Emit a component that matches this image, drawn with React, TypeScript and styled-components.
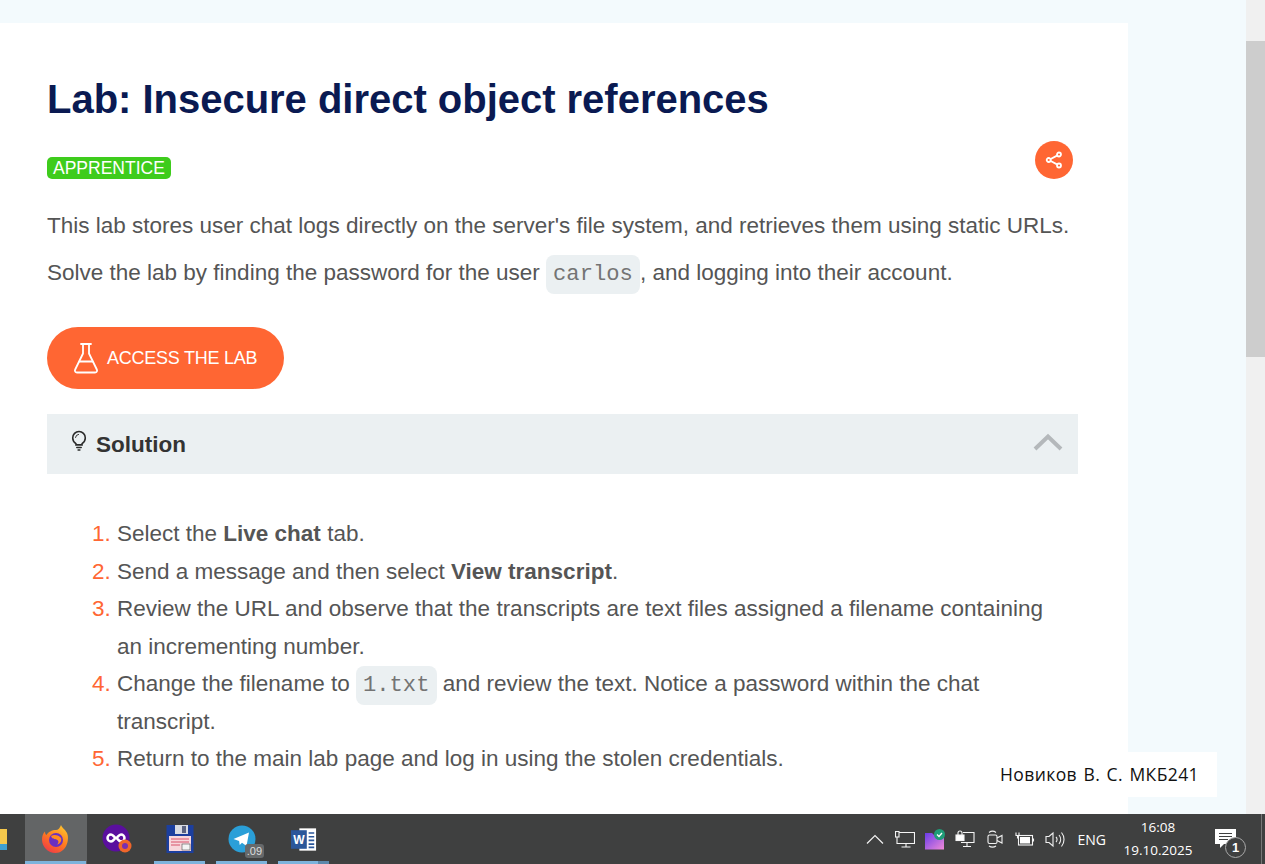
import React from 'react'
import styled, { createGlobalStyle } from 'styled-components'

const GlobalStyle = createGlobalStyle`
  html, body {
    margin: 0;
    padding: 0;
    height: 100%;
    overflow: hidden;
    font-family: "Liberation Sans", Arial, sans-serif;
  }
`

const App = () => {
  const steps = [
    <>Select the <b>Live chat</b> tab.</>,
    <>Send a message and then select <b>View transcript</b>.</>,
    <>Review the URL and observe that the transcripts are text files assigned a filename containing an incrementing number.</>,
    <>Change the filename to <Code>1.txt</Code> and review the text. Notice a password within the chat transcript.</>,
    <>Return to the main lab page and log in using the stolen credentials.</>,
  ]
  return (
    <Screen>
      <GlobalStyle />
      <Browser>
        <Page>
          <Card>
            <Title>Lab: Insecure direct object references</Title>
            <LevelRow>
              <Badge>APPRENTICE</Badge>
              <ShareButton>
                <svg width="18" height="18" viewBox="0 0 18 18" fill="none" stroke="#fff" strokeWidth="1.8">
                  <circle cx="14" cy="3.5" r="2" />
                  <circle cx="3.7" cy="9" r="2" />
                  <circle cx="14" cy="14.5" r="2" />
                  <path d="M5.7 8 12 4.6M5.7 10 12 13.4" />
                </svg>
              </ShareButton>
            </LevelRow>
            <Para>This lab stores user chat logs directly on the server's file system, and retrieves them using static URLs.</Para>
            <Para>Solve the lab by finding the password for the user <Code>carlos</Code>, and logging into their account.</Para>
            <AccessButton>
              <svg width="26" height="32" viewBox="0 0 26 32" fill="none" stroke="#fff" strokeWidth="1.8" strokeLinejoin="round" strokeLinecap="round">
                <path d="M8 2h10M10 2v9.500L2.200 27.500C1.400 29.200 2.300 30.500 4 30.500h18c1.700 0 2.600-1.300 1.800-3L16 11.500V2" />
                <path d="M6.500 19.500h13" />
              </svg>
              ACCESS THE LAB
            </AccessButton>
            <SolutionHeader>
              <BulbIcon width="16" height="21" viewBox="0 0 18 24" fill="none" stroke="#2b2b2b" strokeWidth="1.8" strokeLinecap="round">
                <path d="M5.500 15.500C3.500 14 1.800 12 1.800 9a7.200 7.200 0 0 1 14.400 0c0 3-1.700 5-3.700 6.500v1.500h-7z" />
                <path d="M6.500 20h5M8 22.800h2" />
                <path d="M5 8.500a4 4 0 0 1 3.500-3.500" strokeWidth="1.100" />
              </BulbIcon>
              <SolutionTitle>Solution</SolutionTitle>
              <Chevron width="30" height="18" viewBox="0 0 30 18" fill="none" stroke="#b4b8bb" strokeWidth="4">
                <path d="M2 16 15 3.500 28 16" />
              </Chevron>
            </SolutionHeader>
            <Steps>
              {steps.map((step, i) => (
                <Step key={i}>{step}</Step>
              ))}
            </Steps>
          </Card>
        </Page>
        <Scrollbar>
          <Thumb />
        </Scrollbar>
        <Caption>Новиков В. С. МКБ241</Caption>
      </Browser>
      <Taskbar>
        <Apps>
          <FolderStub />
          <AppSlot $active $running>
            <svg width="30" height="30" viewBox="0 0 30 30">
              <defs>
                <linearGradient id="fx" x1="0.8" y1="0" x2="0.2" y2="1">
                  <stop offset="0" stopColor="#ffc52e" />
                  <stop offset="0.5" stopColor="#ff7a1f" />
                  <stop offset="1" stopColor="#f0364a" />
                </linearGradient>
              </defs>
              <path d="M20 1c1 3 4 4 6 8 3 7-1 20-11.500 20C7 29 1 23 1 15.500 1 12 2 9.500 4 7.500c0 2 .5 3 1.500 3.500C7 8 11 6 15 6c2 0 4-2 5-5z" fill="url(#fx)" />
              <circle cx="15" cy="16" r="7" fill="#6a2fc0" />
              <path d="M10 12c3-2 8-1 10 2 1 3-1 6-4 6.500 2-1.500 2-4-.5-5-2-.5-4 0-5.500-3.500z" fill="#ff8a1f" />
            </svg>
          </AppSlot>
          <AppSlot>
            <svg width="32" height="30" viewBox="0 0 32 30">
              <circle cx="14" cy="14" r="13.500" fill="#5a0f9e" />
              <path d="M9 10.500c2.500 0 3.500 3.500 5 3.500s2.500-3.500 5-3.500a3.500 3.500 0 0 1 0 7c-2.500 0-3.500-3.500-5-3.500s-2.500 3.500-5 3.500a3.500 3.500 0 0 1 0-7z" fill="none" stroke="#fff" strokeWidth="2.500" />
              <circle cx="23" cy="22" r="6.500" fill="#f0662a" />
              <circle cx="23" cy="22" r="3" fill="#7b2fb0" />
            </svg>
          </AppSlot>
          <AppSlot $running>
            <svg width="28" height="30" viewBox="0 0 28 30">
              <rect x="0.500" y="1" width="27" height="28" fill="#1c3f9e" />
              <rect x="9" y="1" width="13" height="9" fill="#d8dbe2" />
              <rect x="16" y="2" width="4" height="7" fill="#5c6480" />
              <rect x="3" y="12" width="22" height="15" fill="#f7d7dc" />
              <path d="M5 15h18M5 18h18M5 21h9" stroke="#d8536b" strokeWidth="1" />
              <rect x="16" y="20" width="8" height="6" fill="#f4f4f4" stroke="#333" strokeWidth="0.500" />
            </svg>
          </AppSlot>
          <AppSlot $running>
            <TelegramWrap>
              <svg width="28" height="28" viewBox="0 0 28 28">
                <circle cx="14" cy="14" r="13.500" fill="#2a9fd8" />
                <path d="M5.500 14 21 7.500 18.500 21l-4.500-3.300-2.300 2.200-.6-4z" fill="#fff" />
              </svg>
              <CountTag>.09</CountTag>
            </TelegramWrap>
          </AppSlot>
          <AppSlot $running $split>
            <svg width="26" height="25" viewBox="0 0 28 26">
              <rect x="9" y="1" width="18" height="24" fill="#fff" />
              <path d="M19 6h6M19 10h6M19 14h6M19 18h6M19 21.500h6" stroke="#2b579a" strokeWidth="1.800" />
              <rect x="0" y="3" width="17" height="20" fill="#2b579a" />
              <text x="8.500" y="18" fontSize="13" fontWeight="700" fill="#fff" textAnchor="middle" fontFamily="Liberation Sans">W</text>
            </svg>
          </AppSlot>
        </Apps>
        <Tray>
          <TrayIcons>
            <TraySlot>
              <svg width="18" height="10" viewBox="0 0 18 10" fill="none" stroke="#f2f2f2" strokeWidth="1.200">
                <path d="M1 9.500 9 1.500 17 9.500" />
              </svg>
            </TraySlot>
            <TraySlot>
              <svg width="20" height="17" viewBox="0 0 20 17" fill="none" stroke="#f5f5f5" strokeWidth="1.100">
                <path d="M4 1.500h15.500v11H2V6M11 12.500v3M6.500 16h9" />
                <rect x="0.500" y="0.500" width="3.500" height="5.500" fill="#3f4040" />
              </svg>
            </TraySlot>
            <TraySlot>
              <svg width="22" height="21" viewBox="0 0 22 21">
                <defs>
                  <linearGradient id="vault" x1="0" y1="0" x2="1" y2="1">
                    <stop offset="0" stopColor="#6a3ce8" />
                    <stop offset="1" stopColor="#f08ad8" />
                  </linearGradient>
                </defs>
                <path d="M1 4h7l2 2h10v14.500H1z" fill="url(#vault)" />
                <circle cx="15.500" cy="5.500" r="5.500" fill="#1f9d78" />
                <path d="M13 5.500l2 2 3-3.500" stroke="#fff" strokeWidth="1.300" fill="none" />
              </svg>
            </TraySlot>
            <TraySlot>
              <svg width="20" height="18" viewBox="0 0 20 18" fill="none" stroke="#f5f5f5" strokeWidth="1.100">
                <path d="M8 2.500h11v10H6M12 12.500v3.500M8 16.500h8" />
                <rect x="1" y="5" width="8" height="5.500" fill="#fff" />
                <path d="M3 5V3a2 2 0 0 1 4 0v2" />
              </svg>
            </TraySlot>
            <TraySlot>
              <svg width="16" height="18" viewBox="0 0 16 18" fill="none" stroke="#f0f0f0" strokeWidth="1.100">
                <rect x="1" y="5" width="9" height="8.500" rx="1.500" />
                <path d="M10 8 15 5.500v7.500L10 10.500M2 2.500c2-1.500 5-1.500 7 0M2 16c2 1.300 5 1.300 7 0" />
              </svg>
            </TraySlot>
            <TraySlot>
              <svg width="20" height="14" viewBox="0 0 20 14" fill="none" stroke="#f5f5f5" strokeWidth="1.100">
                <rect x="3.500" y="3.500" width="14" height="9.500" />
                <rect x="5" y="5" width="10" height="6.500" fill="#fff" stroke="none" />
                <path d="M1 0.500v3h3v-3M2.500 3.500v3M18.500 6.500v3" />
              </svg>
            </TraySlot>
            <TraySlot>
              <svg width="20" height="17" viewBox="0 0 20 17" fill="none" stroke="#f0f0f0" strokeWidth="1.100">
                <path d="M1 5.500h3L8 2v13l-4-3.500H1z" />
                <path d="M11 6a3.500 3.500 0 0 1 0 5M14 4a7 7 0 0 1 0 9M16.500 1.500a11 11 0 0 1 0 14" />
              </svg>
            </TraySlot>
          </TrayIcons>
          <Lang>ENG</Lang>
          <Clock>
            <span>16:08</span>
            <span>19.10.2025</span>
          </Clock>
          <Notify>
            <svg width="21" height="19" viewBox="0 0 21 19">
              <path d="M0 0h21v15H9l-4 4v-4H0z" fill="#fff" />
              <path d="M4 4.500h13M4 7.500h13M4 10.500h9" stroke="#3f4040" strokeWidth="1.100" />
            </svg>
            <NotifyCount>1</NotifyCount>
          </Notify>
          <ShowDesktop />
        </Tray>
      </Taskbar>
    </Screen>
  )
}

const Code = styled.code`
  font-family: "Liberation Mono", "Courier New", monospace;
  font-size: 22.2px;
  line-height: 1;
  color: #747474;
  background: #ebf0f2;
  border-radius: 8px;
  padding: 7px 7px;
`

const Screen = styled.div`
  width: 1265px;
  height: 864px;
  display: flex;
  flex-direction: column;
  overflow: hidden;
`

const Browser = styled.div`
  position: relative;
  flex: 1;
  min-height: 0;
  display: flex;
`

const Page = styled.main`
  flex: 1;
  min-width: 0;
  background: #f3fafd;
  padding-top: 23px;
  overflow: hidden;
`

const Card = styled.article`
  width: 1128px;
  height: 100%;
  box-sizing: border-box;
  background: #fff;
  padding: 52px 50px 0 47px;
`

const Title = styled.h1`
  margin: 0;
  font-size: 40px;
  letter-spacing: -0.02px;
  line-height: 48px;
  font-weight: 700;
  color: #0a1a52;
`

const LevelRow = styled.div`
  display: flex;
  align-items: flex-start;
  justify-content: space-between;
  margin-top: 18px;
  padding-right: 5px;
  height: 61px;
`

const Badge = styled.span`
  margin-top: 16px;
  background: #3ecc1c;
  color: #fff;
  font-size: 17.5px;
  line-height: 22px;
  padding: 0 6px;
  border-radius: 5px;
`

const ShareButton = styled.button`
  width: 38px;
  height: 38px;
  border: none;
  padding: 0;
  border-radius: 50%;
  background: #ff6633;
  display: flex;
  align-items: center;
  justify-content: center;
`

const Para = styled.p`
  margin: 0;
  font-size: 22.5px;
  line-height: 47px;
  color: #555;
  white-space: nowrap;
`

const AccessButton = styled.button`
  display: flex;
  align-items: center;
  gap: 8px;
  margin-top: 31px;
  width: 237px;
  height: 62px;
  padding: 0 0 0 26px;
  border: none;
  border-radius: 31px;
  background: #ff6633;
  color: #fff;
  font-family: "Liberation Sans", Arial, sans-serif;
  font-size: 18px;
  letter-spacing: -0.25px;
`

const SolutionHeader = styled.div`
  display: flex;
  align-items: center;
  margin-top: 25px;
  height: 60px;
  width: 1031px;
  background: #ebf0f2;
  padding: 0 15px 0 24px;
  box-sizing: border-box;
`

const BulbIcon = styled.svg`
  margin-top: -7px;
`

const SolutionTitle = styled.span`
  margin-left: 9px;
  padding-top: 1px;
  flex: 1;
  font-size: 22.5px;
  font-weight: 700;
  color: #333;
`

const Chevron = styled.svg`
  margin-top: -5px;
`

const Steps = styled.ol`
  margin: 41px 0 0;
  padding: 0 0 0 70px;
  width: 940px;
  font-size: 22.5px;
  line-height: 37.5px;
  color: #555;

  b {
    font-weight: 700;
  }
`

const Step = styled.li`
  &::marker {
    color: #ff6633;
  }
`

const Scrollbar = styled.div`
  width: 19px;
  flex-shrink: 0;
  background: #f0f0f0;
  padding-top: 41px;
`

const Thumb = styled.div`
  height: 316px;
  background: #cdcdcd;
`

const Caption = styled.div`
  position: absolute;
  left: 990px;
  top: 752px;
  width: 227px;
  height: 45px;
  box-sizing: border-box;
  padding-left: 10px;
  background: #fff;
  color: #111;
  font-family: "Open Sans", sans-serif;
  font-size: 17.5px;
  letter-spacing: 0.4px;
  word-spacing: 1.5px;
  line-height: 45px;
  white-space: nowrap;
`

const Taskbar = styled.footer`
  height: 50px;
  flex-shrink: 0;
  background: #3f4040;
  display: flex;
  justify-content: space-between;
`

const Apps = styled.div`
  display: flex;
`

const FolderStub = styled.div`
  width: 7px;
  height: 21px;
  margin: 15px 18px 0 0;
  background: linear-gradient(#f5c84c 72%, #3f9fd0 72%);
`

const AppSlot = styled.div<{ $active?: boolean; $running?: boolean; $split?: boolean }>`
  position: relative;
  width: 62px;
  display: flex;
  align-items: center;
  justify-content: center;
  background: ${p => (p.$active ? '#636566' : 'transparent')};

  &::after {
    content: '';
    display: ${p => (p.$running ? 'block' : 'none')};
    position: absolute;
    left: ${p => (p.$active ? '0' : '5px')};
    right: ${p => (p.$active ? '1px' : '6px')};
    bottom: 0;
    height: 3px;
    background: ${p => (p.$split ? 'linear-gradient(90deg, #7db3dc 78%, #5d88ab 78%)' : '#7db3dc')};
  }
`

const TelegramWrap = styled.div`
  position: relative;
  width: 28px;
  height: 28px;
`

const CountTag = styled.span`
  position: absolute;
  right: -8px;
  bottom: -5px;
  padding: 0 2px;
  background: #66696b;
  border-radius: 3px;
  color: #ddd;
  font-size: 11px;
  line-height: 14px;
`

const Tray = styled.div`
  display: flex;
  align-items: center;
  color: #fff;
`

const TrayIcons = styled.div`
  display: flex;
  align-items: center;
`

const TraySlot = styled.div`
  width: 30px;
  display: flex;
  align-items: center;
  justify-content: center;
`

const Lang = styled.span`
  margin-left: 8px;
  font-family: "Open Sans", sans-serif;
  font-size: 14px;
`

const Clock = styled.div`
  margin-left: 17px;
  width: 70px;
  display: flex;
  flex-direction: column;
  align-items: center;
  gap: 4px;
  font-family: "Open Sans", sans-serif;
  font-size: 13.5px;
  line-height: 19px;
`

const Notify = styled.div`
  position: relative;
  margin-left: 22px;
  width: 46px;
  height: 38px;
  padding-top: 9px;
  box-sizing: border-box;
`

const NotifyCount = styled.span`
  position: absolute;
  left: 10px;
  top: 17px;
  width: 19px;
  height: 19px;
  border-radius: 50%;
  border: 1px solid #aaa;
  background: #3f4040;
  font-size: 13px;
  font-weight: 700;
  line-height: 19px;
  text-align: center;
`

const ShowDesktop = styled.div`
  align-self: stretch;
  width: 3px;
  border-left: 1px solid #777;
`

export default App
